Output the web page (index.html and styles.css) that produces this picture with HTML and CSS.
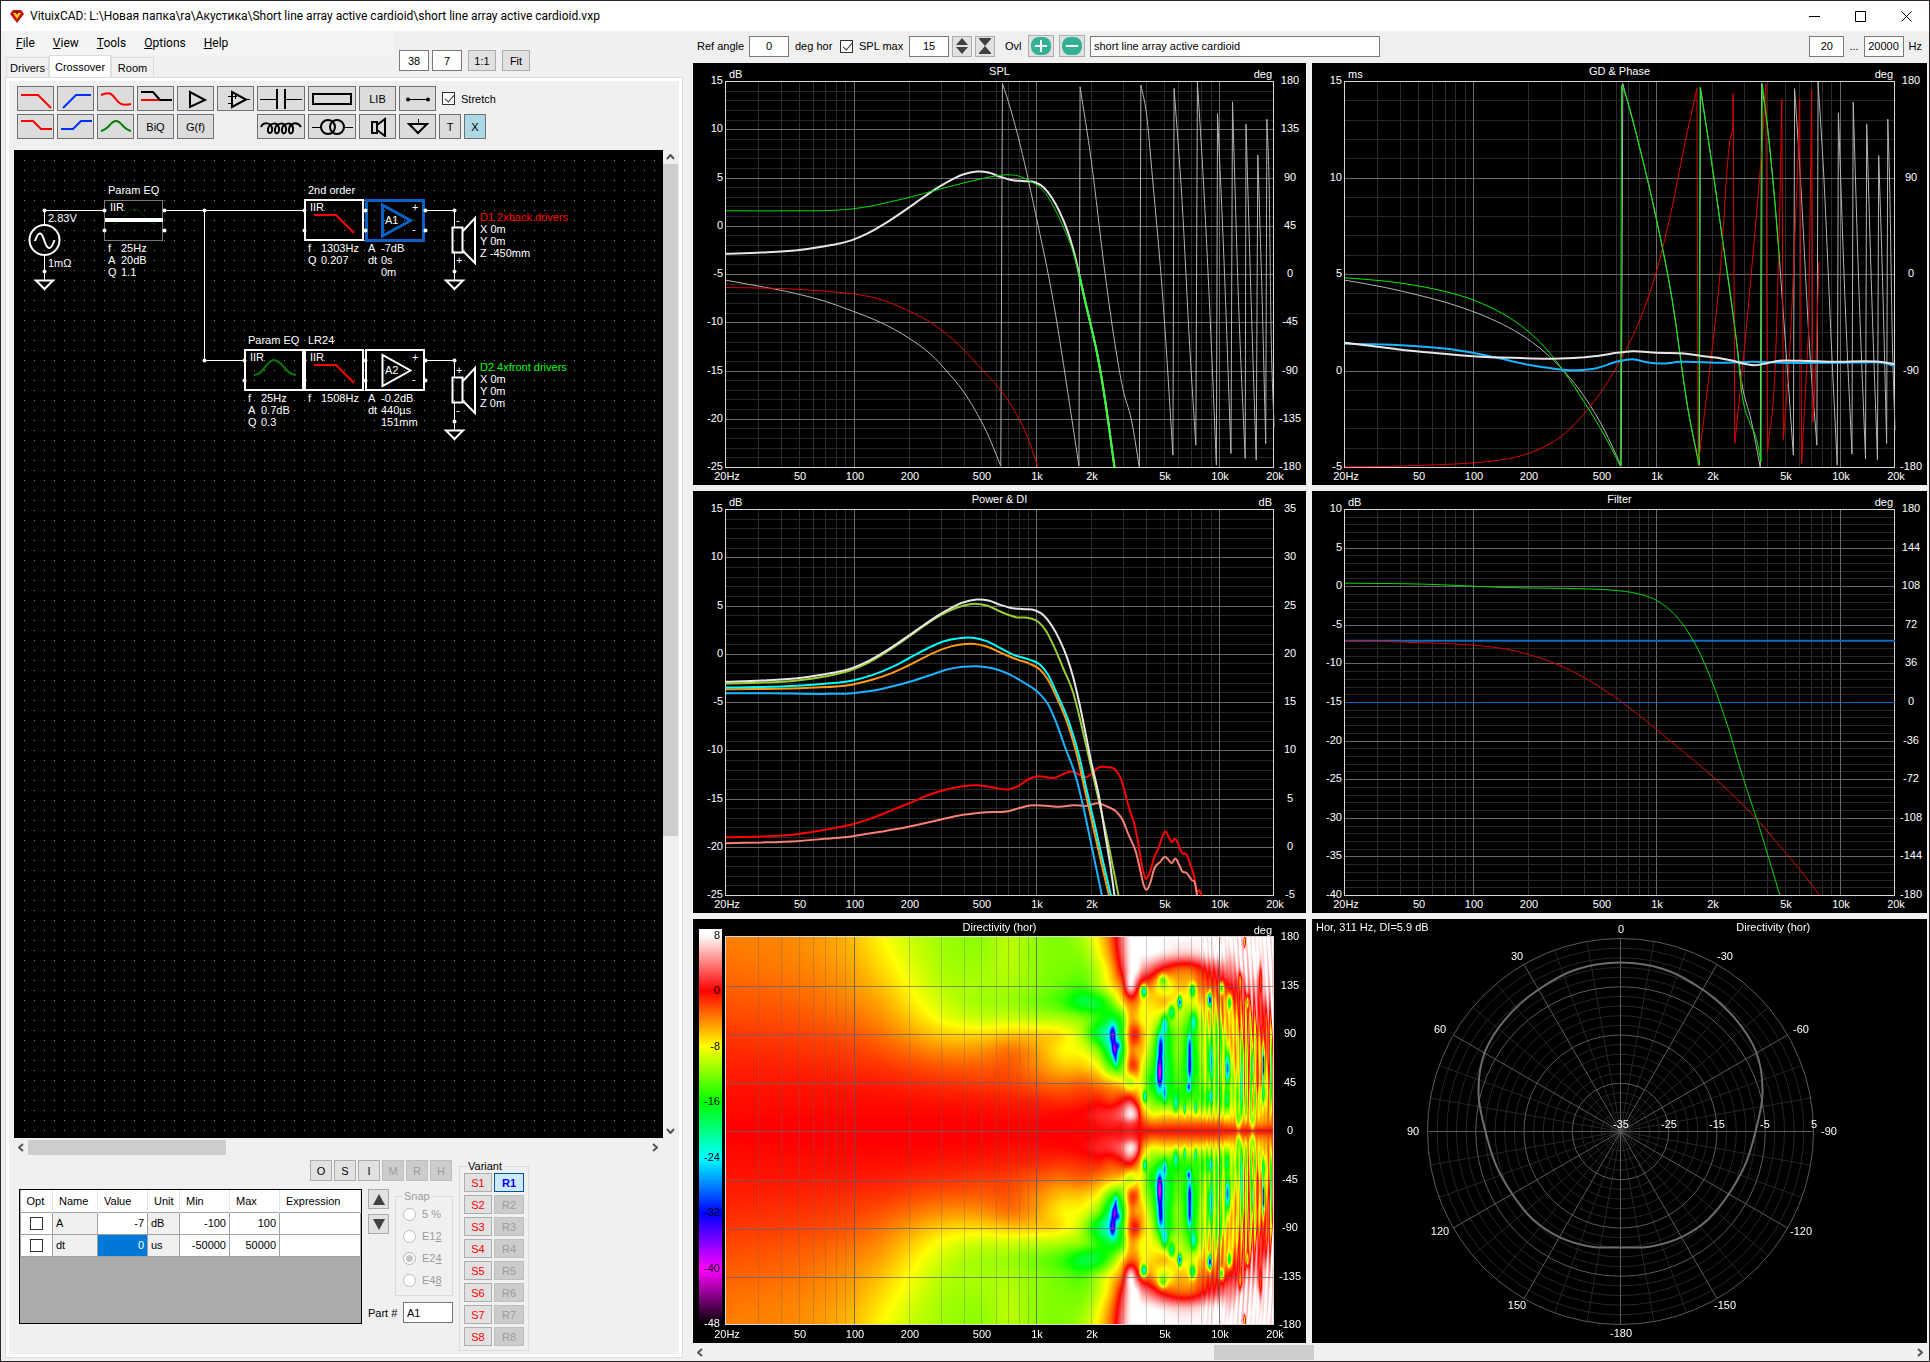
FILE: index.html
```html
<!DOCTYPE html>
<html lang="en">
<head>
  <meta charset="UTF-8">
  <meta name="viewport" content="width=device-width, initial-scale=1.0">
  <title>VituixCAD</title>
  <link rel="stylesheet" href="styles.css">
</head>
<body>

  <!-- Title bar -->
  <header class="titlebar">
    <svg class="logo" width="14" height="13" viewBox="0 0 14 13">
      <path d="M3 0h8l3 4-7 9-7-9z" fill="#c8100c"/>
      <path d="M3 3h3l1 2 1-2h3l-4 6z" fill="#ffd21c"/>
      <path d="M5 1h4l-2 3z" fill="#8a0500"/>
    </svg>
    <h1>VituixCAD: L:\Новая папка\ra\Акустика\Short line array active cardioid\short line array active cardioid.vxp</h1>
    <div class="window-buttons">
      <button aria-label="Minimize"><svg width="11" height="11"><path d="M0 5.5h11" stroke="#000"/></svg></button>
      <button aria-label="Maximize"><svg width="11" height="11"><path d="M.5 .5h10v10h-10z" stroke="#000" fill="none"/></svg></button>
      <button aria-label="Close"><svg width="11" height="11"><path d="M.5 .5l10 10M10.5 .5l-10 10" stroke="#000"/></svg></button>
    </div>
  </header>

  <main class="workspace">

    <!-- Left side: crossover editor -->
    <section class="editor">
      <div class="editor-head">
        <div>
          <nav class="menu">
            <a href="#"><u>F</u>ile</a>
            <a href="#"><u>V</u>iew</a>
            <a href="#"><u>T</u>ools</a>
            <a href="#"><u>O</u>ptions</a>
            <a href="#"><u>H</u>elp</a>
          </nav>
          <div class="tabs">
            <button class="tab">Drivers</button>
            <button class="tab active">Crossover</button>
            <button class="tab">Room</button>
          </div>
        </div>
        <div class="view-tools">
          <input type="text" class="field center" value="38" aria-label="Column">
          <input type="text" class="field center" value="7" aria-label="Row">
          <button class="btn">1:1</button>
          <button class="btn">Fit</button>
        </div>
      </div>

      <div class="tab-page">
        <div class="toolbar">
          <div class="tool-row">
            <button class="tool" aria-label="Low pass"><svg width="32" height="20"><path d="M1 6h17l13 13" stroke="red" stroke-width="2"/></svg></button>
            <button class="tool" aria-label="High pass"><svg width="32" height="20"><path d="M3 19L16 6h15" stroke="#0030ff" stroke-width="2"/></svg></button>
            <button class="tool" aria-label="Band"><svg width="32" height="20"><path d="M1 6c18-8 10 14 30 9" stroke="red" stroke-width="2"/></svg></button>
            <button class="tool" aria-label="Crossover"><svg width="32" height="20"><path d="M1 11h19" stroke="red" stroke-width="2"/><path d="M1 3h12l7 8h12" stroke="#000" stroke-width="2"/></svg></button>
            <button class="tool" aria-label="Buffer"><svg width="32" height="20"><path d="M10 3v15l15-7z" stroke="#000" stroke-width="2"/></svg></button>
            <button class="tool" aria-label="Op amp"><svg width="32" height="20"><path d="M12 3v15l14-7.500z" stroke="#000" stroke-width="2"/><path d="M8 7.500h9M15.500 5v5M8 14.500h3M26 10.500h4" stroke="#000"/></svg></button>
            <button class="tool wide" aria-label="Capacitor"><svg width="44" height="22"><path d="M1 11.500h17M26 11.500h17" stroke="#000"/><path d="M18 1v20M26 1v20" stroke="#000" stroke-width="2"/></svg></button>
            <button class="tool wide" aria-label="Resistor"><svg width="44" height="20"><path d="M3 5h38v10H3z" stroke="#000" stroke-width="2"/></svg></button>
            <button class="tool">LIB</button>
            <button class="tool" aria-label="Wire"><svg width="32" height="20"><path d="M5 10.500h22" stroke="#000"/><circle cx="6" cy="10.500" r="2"/><circle cx="26" cy="10.500" r="2"/></svg></button>
            <label class="check"><input type="checkbox" checked> Stretch</label>
          </div>
          <div class="tool-row">
            <button class="tool" aria-label="Low shelf"><svg width="32" height="20"><path d="M1 4h12l8 8h11" stroke="red" stroke-width="2"/></svg></button>
            <button class="tool" aria-label="High shelf"><svg width="32" height="20"><path d="M1 12h12l8-8h11" stroke="#0030ff" stroke-width="2"/></svg></button>
            <button class="tool" aria-label="Peak"><svg width="32" height="20"><path d="M1 14c9-2 9-10 15-10s6 8 15 10" stroke="green" stroke-width="2"/></svg></button>
            <button class="tool">BiQ</button>
            <button class="tool">G(f)</button>
            <span class="tool-gap"></span>
            <button class="tool wide" aria-label="Coil"><svg width="44" height="20"><path d="M2 10c2-5 10-5 11 1s-5 7-4 1 10-8 11-1-5 7-4 1 10-8 11-1-5 7-4 1 10-8 11-1-5 7-4 1 8-8 12-2" stroke="#000" stroke-width="2"/></svg></button>
            <button class="tool wide" aria-label="Transformer"><svg width="44" height="20"><path d="M2 10.500h9M34 10.500h9" stroke="#000"/><circle cx="18" cy="10" r="7" stroke="#000" stroke-width="2"/><circle cx="27" cy="10" r="7" stroke="#000" stroke-width="2"/></svg></button>
            <button class="tool" aria-label="Driver"><svg width="32" height="20"><path d="M10 5h5v11h-5zM15 8l8-6v17l-8-6" stroke="#000" stroke-width="2"/></svg></button>
            <button class="tool" aria-label="Ground"><svg width="32" height="20"><path d="M16.500 2v5" stroke="#000"/><path d="M7 7h18l-9 9z" stroke="#000" stroke-width="2"/></svg></button>
            <button class="tool narrow">T</button>
            <button class="tool narrow delete">X</button>
          </div>
        </div>

        <div class="schematic-row">
          <svg class="schematic" width="100%" height="100%">
            <defs>
              <pattern id="dots" width="10" height="10" patternUnits="userSpaceOnUse" x="5" y="5">
                <rect x="5" y="5" width="1" height="1" fill="#8a8a8a"/>
              </pattern>
            </defs>
            <rect x="6" y="6" width="100%" height="100%" fill="url(#dots)"/>

            <!-- wires -->
            <g class="wire">
              <path d="M30.500 75V60.500H90M150 60.500H290M190.500 60V210.500H230M411 60.500H440.500V77M440.500 103V130M411 210.500H440.500V227M440.500 253V280M30.500 105V130"/>
              <path d="M22 130.500h17l-8.500 8.500zM432 130.500h17l-8.500 8.500zM432 280.500h17l-8.500 8.500z" stroke-width="2"/>
            </g>

            <!-- generator -->
            <g class="part">
              <circle cx="30.500" cy="90" r="15"/>
              <path d="M21 91c4-12 7-8 9.500 0s6 11 10-1"/>
            </g>
            <text x="34" y="72">2.83V</text>
            <text x="34" y="117">1mΩ</text>

            <!-- bypassed Param EQ -->
            <rect x="90.500" y="50.500" width="58" height="40" fill="none" stroke="#777"/>
            <path d="M99 74c10 0 12-15 21-15s12 15 22 15" fill="none" stroke="#063c06"/>
            <rect x="91" y="68" width="58" height="4" fill="#fff"/>
            <text x="94" y="44">Param EQ</text>
            <text x="96" y="61">IIR</text>
            <text x="94" y="102">f</text><text x="107" y="102">25Hz</text>
            <text x="94" y="114">A</text><text x="107" y="114">20dB</text>
            <text x="94" y="126">Q</text><text x="107" y="126">1.1</text>

            <!-- branch 1 -->
            <rect class="part" x="291" y="50" width="58" height="40"/>
            <path class="lp" d="M300 65h22l18 18"/>
            <text x="294" y="44">2nd order</text>
            <text x="296" y="61">IIR</text>
            <text x="294" y="102">f</text><text x="307" y="102">1303Hz</text>
            <text x="294" y="114">Q</text><text x="307" y="114">0.207</text>
            <g class="part selected">
              <rect x="352.500" y="50.500" width="57" height="40"/>
              <path d="M368.500 55v31l28-15.500z"/>
            </g>
            <text x="371" y="74">A1</text>
            <text x="398" y="61">+</text><text x="398" y="83">-</text>
            <text x="354" y="102">A</text><text x="367" y="102">-7dB</text>
            <text x="354" y="114">dt</text><text x="367" y="114">0s</text>
            <text x="367" y="126">0m</text>
            <g class="part">
              <path d="M438.500 77.500h10v25h-10zM449 81l12-13v45l-12-12"/>
            </g>
            <text x="442" y="74">-</text><text x="442" y="114">+</text>
            <text x="466" y="71" class="red">D1 2xback drivers</text>
            <text x="466" y="83">X 0m</text>
            <text x="466" y="95">Y 0m</text>
            <text x="466" y="107">Z -450mm</text>

            <!-- branch 2 -->
            <g class="part">
              <rect x="231" y="200" width="58" height="40"/>
              <rect x="291" y="200" width="58" height="40"/>
              <rect x="352" y="200" width="58" height="40"/>
              <path d="M368.500 205v31l28-15.500z"/>
              <path d="M438.500 227.500h10v25h-10zM449 231l12-13v45l-12-12"/>
            </g>
            <path d="M240 225c10 0 12-15 20-15s12 15 22 15" fill="none" stroke="#0a7a0a" stroke-width="2"/>
            <path class="lp" d="M300 215h22l18 18"/>
            <text x="234" y="194">Param EQ</text>
            <text x="236" y="211">IIR</text>
            <text x="234" y="252">f</text><text x="247" y="252">25Hz</text>
            <text x="234" y="264">A</text><text x="247" y="264">0.7dB</text>
            <text x="234" y="276">Q</text><text x="247" y="276">0.3</text>
            <text x="294" y="194">LR24</text>
            <text x="296" y="211">IIR</text>
            <text x="294" y="252">f</text><text x="307" y="252">1508Hz</text>
            <text x="371" y="224">A2</text>
            <text x="398" y="211">+</text><text x="398" y="233">-</text>
            <text x="354" y="252">A</text><text x="367" y="252">-0.2dB</text>
            <text x="354" y="264">dt</text><text x="367" y="264">440µs</text>
            <text x="367" y="276">151mm</text>
            <text x="442" y="224">+</text><text x="442" y="264">-</text>
            <text x="466" y="221" class="green">D2 4xfront drivers</text>
            <text x="466" y="233">X 0m</text>
            <text x="466" y="245">Y 0m</text>
            <text x="466" y="257">Z 0m</text>

            <g id="pins" fill="#fff"></g>
          </svg>
          <div class="scroll-v">
            <button aria-label="Scroll up"><svg width="9" height="6"><path d="M1 5l3.500-4L8 5"/></svg></button>
            <div class="track"><div class="thumb"></div></div>
            <button aria-label="Scroll down"><svg width="9" height="6"><path d="M1 1l3.500 4L8 1"/></svg></button>
          </div>
        </div>
        <div class="scroll-h">
          <button aria-label="Scroll left"><svg width="6" height="9"><path d="M5 1L1 4.500L5 8"/></svg></button>
          <div class="track"><div class="thumb"></div></div>
          <button aria-label="Scroll right"><svg width="6" height="9"><path d="M1 1l4 3.500L1 8"/></svg></button>
        </div>

        <div class="bottom">
          <div class="params">
            <div class="mode-buttons">
              <button class="btn">O</button>
              <button class="btn">S</button>
              <button class="btn">I</button>
              <button class="btn" disabled>M</button>
              <button class="btn" disabled>R</button>
              <button class="btn" disabled>H</button>
            </div>
            <div class="params-body">
              <div class="grid-box">
                <table>
                  <thead>
                    <tr><th class="c-opt">Opt</th><th class="c-name">Name</th><th class="c-value">Value</th><th class="c-unit">Unit</th><th class="c-min">Min</th><th class="c-max">Max</th><th>Expression</th></tr>
                  </thead>
                  <tbody>
                    <tr><td class="opt"><input type="checkbox" aria-label="Optimize A"></td><td class="ro">A</td><td class="num">-7</td><td class="ro">dB</td><td class="num">-100</td><td class="num">100</td><td></td></tr>
                    <tr><td class="opt"><input type="checkbox" aria-label="Optimize dt"></td><td class="ro">dt</td><td class="num current">0</td><td class="ro">us</td><td class="num">-50000</td><td class="num">50000</td><td></td></tr>
                  </tbody>
                </table>
              </div>
              <div class="side">
                <div class="side-top">
                  <div class="arrows">
                    <button class="btn" aria-label="Up"><svg width="12" height="11"><path d="M6 0l6 11H0z" fill="#404040"/></svg></button>
                    <button class="btn" aria-label="Down"><svg width="12" height="11"><path d="M6 11l6-11H0z" fill="#404040"/></svg></button>
                  </div>
                  <fieldset class="snap" disabled>
                    <legend>Snap</legend>
                    <label><input type="radio" name="snap"> 5 %</label>
                    <label><input type="radio" name="snap"> <span>E1<u>2</u></span></label>
                    <label><input type="radio" name="snap" checked> <span>E2<u>4</u></span></label>
                    <label><input type="radio" name="snap"> <span>E4<u>8</u></span></label>
                  </fieldset>
                </div>
                <label class="part-no">Part # <input type="text" class="field" value="A1"></label>
              </div>
            </div>
          </div>
          <fieldset class="variant">
            <legend>Variant</legend>
            <button class="btn s">S1</button><button class="btn r on">R1</button>
            <button class="btn s">S2</button><button class="btn r" disabled>R2</button>
            <button class="btn s">S3</button><button class="btn r" disabled>R3</button>
            <button class="btn s">S4</button><button class="btn r" disabled>R4</button>
            <button class="btn s">S5</button><button class="btn r" disabled>R5</button>
            <button class="btn s">S6</button><button class="btn r" disabled>R6</button>
            <button class="btn s">S7</button><button class="btn r" disabled>R7</button>
            <button class="btn s">S8</button><button class="btn r" disabled>R8</button>
          </fieldset>
        </div>
      </div>
    </section>

    <!-- Right side: graphs -->
    <section class="graphs">
      <div class="graph-tools">
        <label class="w-ref" for="refangle">Ref angle</label>
        <input id="refangle" type="text" class="field center w-angle" value="0">
        <span class="w-deg">deg hor</span>
        <label class="check w-spl"><input type="checkbox" checked> SPL max</label>
        <input type="text" class="field center w-angle" value="15" aria-label="SPL max">
        <button class="btn icon" aria-label="Expand"><svg width="14" height="16"><path d="M7 0l6 7H1zM7 16l6-7H1z" fill="#404040"/></svg></button>
        <button class="btn icon" aria-label="Shrink"><svg width="14" height="16"><path d="M1 0h12v1L7 8 1 1zM1 16h12v-1L7 8l-6 7z" fill="#404040"/></svg></button>
        <span class="w-ovl">Ovl</span>
        <button class="btn ovl" aria-label="Add overlay"><svg width="20" height="18"><rect width="20" height="18" rx="8" fill="#33b194"/><path d="M4 9h12M10 3v12" stroke="#fff" stroke-width="2"/></svg></button>
        <button class="btn ovl" aria-label="Remove overlay"><svg width="20" height="18"><rect width="20" height="18" rx="8" fill="#33b194"/><path d="M4 9h12" stroke="#fff" stroke-width="2"/></svg></button>
        <input type="text" class="field w-project" value="short line array active cardioid" aria-label="Overlay name">
        <div class="range">
          <input type="text" class="field center w-from" value="20" aria-label="From Hz">
          <span class="dots">...</span>
          <input type="text" class="field center w-to" value="20000" aria-label="To Hz">
          <span class="hz">Hz</span>
        </div>
      </div>
      <div class="charts">
        <div class="chart" id="spl"></div>
        <div class="chart" id="gd"></div>
        <div class="chart" id="power"></div>
        <div class="chart" id="filter"></div>
        <div class="chart" id="heat"></div>
        <div class="chart" id="polar"></div>
      </div>
      <div class="scroll-h wide-scroll">
        <button aria-label="Scroll left"><svg width="6" height="9"><path d="M5 1L1 4.500L5 8"/></svg></button>
        <div class="track"><div class="thumb"></div></div>
        <button aria-label="Scroll right"><svg width="6" height="9"><path d="M1 1l4 3.500L1 8"/></svg></button>
      </div>
    </section>
  </main>

  <script src="charts.js"></script>
</body>
</html>
```
FILE: styles.css
```css
* {
  box-sizing: border-box;
}
body {
  margin: 0;
  height: 100vh;
  display: flex;
  flex-direction: column;
  background: #f0f0f0;
  border: 1px solid #2b2629;
  overflow: hidden;
  color: #000;
  font: 11px/14px "Liberation Sans", sans-serif;
}
button, input, legend, fieldset, table {
  font: inherit;
  color: inherit;
}
button {
  padding: 0;
  border: none;
  background: none;
}
svg {
  display: block;
}

/* Title bar */
.titlebar {
  flex: none;
  height: 30px;
  display: flex;
  align-items: center;
  background: #fff;
  padding-left: 9px;
}
.titlebar h1 {
  flex: 1;
  margin: 0 0 0 6px;
  font: 12px/16px Roboto, sans-serif;
}
.window-buttons {
  display: flex;
}
.window-buttons button {
  width: 46px;
  height: 30px;
  display: grid;
  place-items: center;
}

.workspace {
  flex: 1;
  min-height: 0;
  display: flex;
}

/* Shared controls */
.field {
  height: 21px;
  border: 1px solid #7a7a7a;
  background: #fff;
  padding: 0 3px;
  min-width: 0;
}
.center {
  text-align: center;
}
.btn {
  border: 1px solid #adadad;
  background: #e1e1e1;
  display: grid;
  place-items: center;
}
.btn:disabled {
  background: #ccc;
  border-color: #bfbfbf;
  color: #9c9c9c;
}
.check {
  display: flex;
  align-items: center;
  gap: 6px;
}
input[type="checkbox"] {
  appearance: none;
  width: 13px;
  height: 13px;
  margin: 0;
  border: 1px solid #333;
  background: #fff;
}
input[type="checkbox"]:checked::before {
  content: "";
  display: block;
  width: 4px;
  height: 8px;
  margin: 0 0 0 4px;
  border: solid #333;
  border-width: 0 1px 1px 0;
  transform: rotate(40deg);
}

/* Editor */
.editor {
  flex: 0 0 682px;
  display: flex;
  flex-direction: column;
  padding: 0 0 3px 4px;
}
.editor-head {
  display: flex;
  height: 46px;
}
.menu {
  width: 388px;
  height: 24px;
  padding-left: 2px;
  display: flex;
  background: #f4f4f4;
}
.menu a {
  padding: 0 9px;
  color: #000;
  text-decoration: none;
  font: 12px/24px Roboto, sans-serif;
}
.tabs {
  display: flex;
  align-items: flex-end;
  height: 22px;
  padding-left: 1px;
}
.tab {
  width: 43px;
  height: 20px;
  border: 1px solid #dcdcdc;
  border-bottom: none;
}
.tab.active {
  width: 62px;
  height: 22px;
  background: #fff;
}
.view-tools {
  display: flex;
  gap: 3px;
  padding: 19px 0 0 6px;
}
.view-tools .field {
  width: 30px;
}
.view-tools .btn {
  width: 28px;
  height: 21px;
  margin-left: 3px;
}
.tab-page {
  flex: 1;
  min-height: 0;
  display: flex;
  flex-direction: column;
  border: 1px solid #dcdcdc;
  box-shadow: inset 0 0 0 3px #fff;
  padding: 8px 3px 4px 8px;
}

.toolbar {
  padding: 0 0 11px 3px;
}
.tool-row {
  display: flex;
  align-items: center;
  gap: 3px;
  margin-bottom: 3px;
}
.tool-row:last-child {
  margin-bottom: 0;
}
.tool {
  width: 37px;
  height: 25px;
  border: 1px solid #707070;
  background: #dcdcdc;
  display: grid;
  place-items: center;
}
.tool svg {
  fill: none;
}
.tool circle:not([stroke]) {
  fill: #000;
}
.tool.wide {
  width: 48px;
}
.tool.narrow {
  width: 22px;
}
.tool.delete {
  background: #add8e6;
}
.tool-gap {
  width: 37px;
}
.tool-row .check {
  margin-left: 3px;
}

/* Schematic */
.schematic-row {
  flex: 1;
  min-height: 0;
  display: flex;
}
.schematic {
  flex: 1;
  min-width: 0;
  background: #000;
}
.schematic text {
  fill: #fff;
}
.schematic text.red {
  fill: #f00;
}
.schematic text.green {
  fill: #0f0;
}
.wire {
  fill: none;
  stroke: #fff;
}
.part {
  fill: none;
  stroke: #fff;
  stroke-width: 2;
}
.selected {
  stroke: #0b62c4;
  stroke-width: 3;
}
.lp {
  fill: none;
  stroke: #f00;
  stroke-width: 2;
}

.scroll-v {
  width: 16px;
  display: flex;
  flex-direction: column;
}
.scroll-v button,
.scroll-h button {
  width: 14px;
  height: 14px;
  display: grid;
  place-items: center;
}
.scroll-v svg,
.scroll-h svg {
  fill: none;
  stroke: #555;
  stroke-width: 2;
}
.track {
  flex: 1;
}
.scroll-v .thumb {
  width: 15px;
  height: 70%;
  background: #cdcdcd;
}
.scroll-h {
  flex: none;
  height: 17px;
  padding-top: 1px;
  margin-right: 17px;
  display: flex;
  align-items: center;
}
.scroll-h .thumb {
  width: 32%;
  height: 15px;
  background: #cdcdcd;
}
.scroll-h.wide-scroll {
  height: 18px;
  margin: 0;
}
.wide-scroll .thumb {
  width: 100px;
  margin-left: 42%;
}

/* Parameters under the schematic */
.bottom {
  flex: none;
  display: flex;
  align-items: flex-start;
  gap: 6px;
  padding: 4px 0 0 5px;
  height: 198px;
}
.params {
  width: 434px;
}
.mode-buttons {
  display: flex;
  justify-content: flex-end;
  gap: 2px;
  padding: 1px 1px 0 0;
}
.mode-buttons .btn {
  width: 22px;
  height: 21px;
}
.params-body {
  display: flex;
  gap: 6px;
  margin-top: 8px;
}
.grid-box {
  width: 343px;
  height: 135px;
  border: 1px solid #000;
  background: #ababab;
}
.grid-box table {
  width: 100%;
  table-layout: fixed;
  border-collapse: collapse;
}
.grid-box th {
  height: 22px;
  padding: 0 6px;
  background: #fff;
  border-right: 1px solid #e5e5e5;
  font-weight: normal;
  text-align: left;
}
.grid-box td {
  height: 22px;
  padding: 0 3px;
  background: #fff;
  border: 1px solid #a0a0a0;
}
.grid-box td.ro {
  background: #f0f0f0;
}
.grid-box td.num {
  text-align: right;
}
.grid-box td.current {
  background: #0078d7;
  color: #fff;
}
.grid-box td.opt {
  padding-left: 9px;
}
.opt input {
  display: block;
}
.c-opt { width: 32px; }
.c-name { width: 45px; }
.c-value { width: 50px; }
.c-unit { width: 32px; }
.c-min { width: 50px; }
.c-max { width: 50px; }

.side {
  flex: 1;
}
.side-top {
  display: flex;
  gap: 6px;
}
.arrows .btn {
  width: 21px;
  height: 20px;
  margin-bottom: 5px;
}
fieldset {
  margin: 0;
  padding: 0;
  border: 1px solid #dcdcdc;
  min-width: 0;
}
legend {
  padding: 0 1px;
  margin-left: 7px;
}
.snap {
  width: 58px;
  height: 107px;
  color: #9c9c9c;
}
.snap label {
  display: flex;
  align-items: center;
  gap: 6px;
  height: 22px;
  padding-left: 7px;
}
.snap input {
  appearance: none;
  width: 13px;
  height: 13px;
  margin: 0;
  border: 1px solid #bcbcbc;
  border-radius: 50%;
  background: #fff;
}
.snap input:checked {
  background: #c4c4c4;
  box-shadow: inset 0 0 0 2px #fff;
}
.part-no {
  display: flex;
  align-items: center;
  justify-content: space-between;
  margin-top: 6px;
}
.part-no .field {
  width: 50px;
}
.variant {
  width: 70px;
  height: 192px;
  display: grid;
  grid-template-columns: 28px 30px;
  grid-auto-rows: 19px;
  gap: 3px 2px;
  justify-content: center;
  align-content: start;
}
.variant .s {
  color: #f00;
}
.variant .on {
  color: #00f;
  font-weight: bold;
  background: #cce8ff;
  border-color: #005499;
}

/* Graphs */
.graphs {
  flex: 1;
  min-width: 0;
  display: flex;
  flex-direction: column;
  padding: 0 2px 0 10px;
}
.graph-tools {
  flex: none;
  height: 32px;
  display: flex;
  align-items: center;
  padding: 0 5px 2px 4px;
}
.w-ref { width: 52px; }
.w-angle { width: 40px; }
.w-deg { padding-left: 6px; width: 51px; }
.w-spl { width: 69px; }
.w-ovl { width: 23px; margin-left: 10px; }
.w-project { width: 290px; }
.w-from { width: 35px; }
.w-to { width: 40px; }
.btn.icon {
  width: 20px;
  height: 21px;
  margin-left: 3px;
}
.btn.ovl {
  width: 26px;
  height: 22px;
  margin-right: 5px;
}
.range {
  margin-left: auto;
  display: flex;
  align-items: center;
  gap: 5px;
}
.charts {
  flex: 1;
  min-height: 0;
  display: grid;
  grid-template-columns: 613fr 614fr;
  grid-template-rows: 422fr 422fr 424fr;
  gap: 6px;
}
.chart {
  position: relative;
  min-width: 0;
  min-height: 0;
  overflow: hidden;
  background: #000;
}
.chart svg {
  position: absolute;
  inset: 0;
  width: 100%;
  height: 100%;
}
.chart canvas {
  position: absolute;
}
.chart text {
  fill: #fff;
}
.chart text.dark {
  fill: #000;
}
.mid {
  text-anchor: middle;
}
.end {
  text-anchor: end;
}
```
FILE: charts.js
```javascript
const NS = 'http://www.w3.org/2000/svg';

// plot margins inside a chart
const M = { left: 33, right: 32, top: 18, bottom: 18 };

const FREQ_LABELS = [[20, '20Hz'], [50, '50'], [100, '100'], [200, '200'], [500, '500'], [1000, '1k'], [2000, '2k'], [5000, '5k'], [10000, '10k'], [20000, '20k']];

const PHASE_TAIL = '1141 255 1155 340 1170 530 1198 920 1222 1365|1225 265 1245 600 1265 1050 1280 1335|1284 245 1300 560 1318 1000 1332 1395|1335 340 1352 800 1369 1360|1373 305 1388 900 1405 1375|1407 372 1420 900 1433 1380|1437 465 1448 900 1457 1330|1460 357 1466 580 1470 950 1478 1280';

// sheet: x, y, width, height of the plot area the trace points are given in.
// A bar in a trace marks a phase wrap.
const CHARTS = {
  spl: {
    title: 'SPL', left: 'dB', right: 'deg', sheet: [90, 244, 1388, 1158], minor: 5,
    leftTicks: [15, 10, 5, 0, -5, -10, -15, -20, -25],
    rightTicks: [180, 135, 90, 45, 0, -45, -90, -135, -180],
    traces: [
      ['#b4b4b4', 1, '90 840 150 853 210 866 270 881 340 903 411 933 480 966 552 1013 610 1064 650 1114 690 1172 720 1228 750 1295 775 1365 786 1398|790 250 800 285 830 410 874 640 920 910 960 1210 984 1398|987 260 1015 480 1050 820 1075 1030 1095 1165 1117 1260 1137 1402|' + PHASE_TAIL],
      ['#e00000', 1, '90 862 150 863 250 866 340 873 411 881 470 894 530 920 570 942 610 968 650 1003 690 1046 734 1103 780 1162 820 1230 850 1300 870 1365 880 1402'],
      ['#e6e6e6', 2, '90 761 180 757 270 750 340 738 380 729 411 719 450 699 490 672 530 641 570 608 610 575 650 546 690 523 725 514 755 517 785 530 815 540 845 543 874 547 895 562 915 592 935 635 955 692 970 750 985 825 1000 905 1015 980 1030 1060 1045 1160 1060 1280 1074 1402'],
      ['#00e000', 1, '90 632 250 632 370 630 411 626 460 617 510 604 560 590 600 577 650 561 700 546 740 535 775 527 810 524 835 529 855 540 874 552 900 580 920 620 945 682 968 752 985 825'],
      ['#30ff30', 2, '985 825 1000 905 1015 980 1030 1060 1045 1160 1060 1280 1074 1402']
    ]
  },
  gd: {
    title: 'GD & Phase', left: 'ms', right: 'deg', sheet: [99, 244, 1380, 1158], minor: 5,
    leftTicks: [15, 10, 5, 0, -5],
    rightTicks: [180, 90, 0, -90, -180],
    traces: [
      ['#b4b4b4', 1, '99 840 200 862 280 884 350 906 420 934 480 964 540 1003 600 1056 650 1115 700 1190 750 1290 792 1398|796 250 840 450 880 655 920 900 960 1230 988 1395|991 262 1017 470 1050 750 1080 1010 1095 1150 1118 1260 1141 1402|1144 250 1160 390 1180 640 1200 960 1224 1365|1227 265 1240 500 1265 1050 1283 1335|1286 245 1300 520 1320 1050 1334 1395|1337 338 1352 850 1371 1362|1374 306 1388 850 1405 1376|1408 372 1421 900 1435 1380|1438 466 1448 850 1458 1330|1461 357 1466 580 1472 1000 1479 1290'],
      ['#e00000', 1, '99 1400 200 1399 300 1395 420 1388 480 1381 540 1367 590 1345 640 1310 690 1253 742 1174 790 1080 840 955 879 820 920 620 950 440 982 265|985 1398 1010 1150 1040 820 1065 420 1072 390|1073 280|1077 1330 1095 1120 1120 800 1145 450|1155 250|1159 1355 1180 1050 1190 620|1195 297|1199 1318 1215 1050 1235 500|1240 295|1245 1390 1262 1000|1270 270|1273 1265 1280 1100 1288 785'],
      ['#00f000', 1, '99 833 200 843 300 861 360 877 420 899 470 925 520 959 560 995 600 1041 650 1117 700 1207 740 1285 770 1350 790 1398|793 255 800 275 840 450 880 655 920 900 960 1230 987 1395|990 262 1017 470 1050 750 1080 1010 1095 1180 1115 1270 1130 1310 1143 1385|1146 250 1160 390 1180 640 1190 790'],
      ['#18b4ff', 2, '99 1031 180 1032 280 1038 370 1048 420 1058 480 1073 560 1094 620 1105 680 1110 730 1104 780 1085 820 1077 860 1087 890 1090 940 1085 1050 1088 1120 1085 1200 1088 1400 1087 1450 1088 1479 1098'],
      ['#e6e6e6', 2, '99 1028 150 1035 230 1047 320 1058 420 1068 520 1073 640 1075 700 1071 740 1066 780 1058 820 1053 880 1058 950 1060 990 1067 1040 1074 1070 1081 1100 1091 1125 1095 1155 1090 1180 1083 1240 1082 1320 1085 1450 1086 1479 1092']
    ]
  },
  power: {
    title: 'Power & DI', left: 'dB', right: 'dB', sheet: [90, 73, 1388, 1158], minor: 5,
    leftTicks: [15, 10, 5, 0, -5, -10, -15, -20, -25],
    rightTicks: [35, 30, 25, 20, 15, 10, 5, 0, -5],
    traces: [
      ['#ff0000', 2, '90 1056 180 1054 270 1047 340 1034 411 1017 460 999 510 975 552 955 600 931 650 912 690 903 734 901 770 908 805 913 830 903 855 883 875 874 925 877 945 866 965 859 985 868 1003 876 1017 865 1032 848 1055 846 1078 856 1090 880 1100 920 1110 965 1125 1020 1135 1080 1145 1150 1153 1180 1162 1165 1175 1115 1187 1085 1197 1048 1204 1039 1212 1058 1218 1070 1228 1061 1235 1075 1245 1104 1256 1107 1265 1135 1275 1170 1283 1220 1289 1215 1295 1231'],
      ['#fa8072', 2, '90 1074 180 1072 270 1068 340 1061 411 1053 480 1040 552 1025 620 1007 690 989 750 981 805 978 835 968 860 961 900 962 935 965 970 960 1005 962 1032 954 1055 964 1080 981 1095 1005 1110 1050 1128 1100 1140 1160 1148 1200 1155 1214 1164 1195 1175 1150 1190 1130 1202 1115 1210 1123 1219 1134 1229 1120 1236 1135 1245 1158 1256 1163 1270 1185 1278 1195 1283 1230'],
      ['#18b4ff', 2, '90 624 200 624 350 626 411 624 460 617 510 604 560 588 610 569 650 553 690 545 725 543 765 549 800 563 840 589 880 621 905 656 925 708 950 790 975 870 995 965 1012 1060 1028 1150 1042 1230'],
      ['#ff9812', 2, '90 612 300 608 411 598 460 584 510 564 552 541 600 512 640 491 680 479 715 476 750 484 790 505 830 524 860 536 885 553 905 583 930 643 958 725 980 815 1000 920 1020 1025 1040 1130 1060 1230'],
      ['#00ffff', 2, '90 607 270 602 340 596 411 586 460 570 510 546 552 520 600 490 640 469 680 459 715 458 750 468 785 489 820 510 860 524 885 538 905 567 930 630 960 715 985 815 1005 922 1025 1025 1045 1130 1065 1230'],
      ['#9acd32', 2, '90 595 270 586 340 574 411 553 450 533 490 505 530 474 570 440 610 407 650 380 690 362 720 356 750 361 790 382 825 396 860 399 880 409 900 436 920 482 945 552 970 625 985 694 1000 770 1016 852 1035 950 1060 1085 1084 1230'],
      ['#e6e6e6', 2, '90 590 180 586 270 579 340 567 380 558 411 548 450 528 490 501 530 470 570 437 610 404 650 375 690 352 725 343 755 346 785 359 815 369 845 372 874 376 895 391 915 421 935 464 955 521 970 579 985 654 1000 740 1015 830 1035 935 1050 1045 1064 1145 1074 1231']
    ]
  },
  filter: {
    title: 'Filter', left: 'dB', right: 'deg', sheet: [99, 73, 1380, 1158], minor: 5,
    leftTicks: [10, 5, 0, -5, -10, -15, -20, -25, -30, -35, -40],
    rightTicks: [180, 144, 108, 72, 36, 0, -36, -72, -108, -144, -180],
    traces: [
      ['#0b6cc8', 2, '99 467 1479 467'],
      ['#0b6cc8', 1, '99 652 1479 652'],
      ['#d80000', 1, '99 467 200 469 300 473 420 480 500 491 560 508 620 532 680 565 740 607 810 665 880 732 950 802 1020 872 1080 939 1133 1003 1200 1097 1250 1168 1289 1230'],
      ['#00dc00', 1, '99 294 200 295 300 297 420 303 500 307 600 309 700 311 780 316 820 322 850 331 880 345 905 365 935 400 960 441 985 493 1010 560 1038 648 1065 745 1090 848 1115 940 1133 1005 1160 1110 1190 1230']
    ]
  }
};

// Directivity: response in dB at each column position (of 549) and angle
const ANGLES = [180, 165, 150, 135, 120, 105, 90, 75, 60, 45, 30, 15, 7, 0];
const COLUMNS = [
  [0, -4, -3.7, -3.4, -3, -2.6, -2.2, -1.7, -1.3, -1, -.7, -.4, -.2, 0, 0],
  [80, -4.6, -4.4, -4.1, -3.7, -3.2, -2.7, -2.1, -1.6, -1.1, -.7, -.4, -.1, 0, 0],
  [127, -6, -5.7, -5.2, -4.8, -4.2, -3.5, -2.7, -2, -1.4, -.8, -.4, -.1, 0, 0],
  [154, -7.8, -7.3, -6.7, -6, -5.2, -4.4, -3.5, -2.5, -1.6, -.9, -.4, -.1, 0, 0],
  [183, -9.6, -9.2, -8.6, -8, -7.2, -6.2, -4.9, -3.4, -2.1, -1.2, -.5, -.1, 0, 0],
  [217, -11, -10.9, -10.6, -10.2, -9.6, -8.4, -6.4, -4.4, -2.7, -1.5, -.7, -.1, 0, 0],
  [255, -11.5, -11.3, -10.9, -10.8, -10.9, -9.6, -6.8, -4.5, -2.9, -1.8, -.8, -.2, 0, 0],
  [285, -10.3, -10.3, -10.4, -10.8, -11.2, -9.6, -6.2, -3.6, -2.7, -2, -1, -.3, 0, 0],
  [310, -11.5, -11.5, -11.5, -11.7, -12.3, -10.2, -6.4, -5, -4.2, -2.8, -1.2, -.3, 0, 0],
  [336, -12, -12, -12.2, -12.8, -14.2, -10.8, -7.4, -7.6, -6, -3.6, -1.6, -.2, 0, 0],
  [360, -10, -11, -12, -13.5, -18, -12.5, -12, -9, -6.5, -3.2, -1.2, .3, 0, 0],
  [372, -7.5, -8.5, -10, -11, -17, -15, -18, -12, -8, -4.2, -1, 1, .5, 0],
  [387, -2, -3, -5, -7, -12, -17, -22, -20, -14, -6, -2, 1.8, 1, 0],
  [395, 3, 2, 0, -4, -8, -15, -17, -18, -14, -7, -1, 3, 1, 0],
  [406, 8, 8, 8, 7, -3, -5, -1.5, -4, -2, -10, 0, 7, 2, .5],
  [411, 8, 8, 8, 2, -4, -6, -1, -5, -3, -8, -3, 4, 1, 0],
  [416, 8, 8, 5, -2, -7, -8, -5, -6, -8, -9, -7, -3, -1, 0],
  [424, 8, 8, 3, -4, -7, -8, -9, -11, -13, -15, -12, -7, -3, 0],
  [438, 8, 7, -1, -9, -6, -11, -17, -18, -19, -18, -14, -7, -3, 0],
  [453, 8, 6, -3, -6, -8, -10, -12, -12, -13, -14, -15, -7, -3, 0],
  [465, 8, 6, -3, -6, -9, -13, -16, -18, -18, -16, -14, -7, -3, 0],
  [478, 8, 7, 0, -3, -6, -9, -10, -10, -11, -12, -14, -8, -3, 0],
  [490, 8, 8, 2, -2, -5, -8, -12, -12, -12, -12, -13, -8, -3, 0],
  [505, 8, 7, 4, 0, -4, -6, -7, -8, -9, -10, -11, -8, -4, 0],
  [520, 8, 8, 7, 4, 1, -3, -5, -6, -6, -7, -10, -8, -4, 0],
  [535, 8, 8, 8, 6, 3, 0, -3, -4, -4, -5, -7, -6, -4, 0],
  [549, 8, 8, 8, 7, 5, 3, 0, -1, -3, -4, -6, -5, -3, 0]
];
// local nulls: position, angle, widths, depth
const NULLS = [
  [387, 90, 3, 9, -14], [389, 76, 3, 7, -16], [393, 80, 2, 4, -8], [390, 66, 2, 6, -10],
  [418, 130, 3, 5, -20], [437, 141, 4, 5, -7], [454, 120, 2, 5, -22], [446, 111, 3, 6, -12],
  [439, 100, 3, 8, -12], [435, 80, 3, 12, -14], [434, 55, 3, 16, -22], [419, 32, 2, 5, -14], [439, 35, 2, 8, -12],
  [467, 131, 3, 6, -14], [468, 102, 3, 8, -10], [464, 80, 2, 10, -12], [464, 60, 2, 14, -16], [463, 41, 2, 4, -14],
  [459, 21, 1, 5, -14], [470, 22, 1, 5, -14], [450, 25, 2, 7, -10], [484, 122, 2, 6, -28],
  [485, 66, 2, 18, -14], [485, 32, 2, 6, -12], [496, 133, 2, 5, -14], [504, 120, 2, 6, -14],
  [502, 58, 2, 14, -20], [502, 30, 2, 9, -10], [516, 50, 2, 22, -14], [527, 62, 1, 18, -22], [538, 62, 1, 15, -30],
  [538, 35, 2, 10, -14], [522, 120, 1, 6, -18], [546, 60, 1, 25, -14], [519, 176, 1, 5, -20],
  [515, 140, 2, 8, -8], [535, 142, 2, 14, -10], [527, 10, 2, 8, -8], [513, 10, 2, 8, -8]
];
const SCALE = [
  [8, 255, 255, 255], [0, 255, 0, 0], [-8, 255, 255, 0], [-16, 0, 255, 0], [-24, 0, 255, 255],
  [-32, 0, 0, 255], [-40, 255, 0, 255], [-48, 0, 0, 0]
];

function add(parent, name, attrs, text) {
  const el = document.createElementNS(NS, name);
  for (const key in attrs) el.setAttribute(key, attrs[key]);
  if (text !== undefined) el.textContent = text;
  parent.appendChild(el);
  return el;
}

// slope at point k, neighbours weighted by distance
function slopeAt(xs, ys, k) {
  const s = i => (ys[i + 1] - ys[i]) / (xs[i + 1] - xs[i]);
  if (xs.length < 2) return 0;
  if (k === 0) return s(0);
  if (k === xs.length - 1) return s(k - 1);
  const h1 = xs[k] - xs[k - 1], h2 = xs[k + 1] - xs[k];
  return (h2 * s(k - 1) + h1 * s(k)) / (h1 + h2);
}

function smooth(pts) {
  const xs = pts.map(p => p[0]), ys = pts.map(p => p[1]);
  let d = '';
  for (let i = 0; i < pts.length - 1; i++) {
    const h = (xs[i + 1] - xs[i]) / 3;
    d += 'C' + [xs[i] + h, ys[i] + slopeAt(xs, ys, i) * h,
      xs[i + 1] - h, ys[i + 1] - slopeAt(xs, ys, i + 1) * h,
      xs[i + 1], ys[i + 1]].map(v => v.toFixed(2)).join(' ');
  }
  return d;
}

function frame(box) {
  const w = box.clientWidth, h = box.clientHeight;
  box.innerHTML = '';
  return {
    svg: add(box, 'svg', {}),
    w, h,
    x0: M.left, y0: M.top,
    pw: w - M.left - M.right, ph: h - M.top - M.bottom
  };
}

function freqX(f, hz) {
  return f.x0 + f.pw * Math.log10(hz / 20) / 3;
}

function vLines(f, minor, major) {
  for (let dec = 10; dec <= 10000; dec *= 10) {
    for (let n = 1; n < 10; n++) {
      const hz = dec * n;
      if (hz <= 20 || hz >= 20000) continue;
      const x = Math.round(freqX(f, hz)) + .5;
      add(f.svg, 'path', { d: `M${x} ${f.y0}v${f.ph}`, stroke: n === 1 ? major : minor });
    }
  }
}

function labels(f, chart) {
  add(f.svg, 'text', { x: f.w / 2, y: 12, class: 'mid' }, chart.title);
  if (chart.left) add(f.svg, 'text', { x: f.x0 + 3, y: 15 }, chart.left);
  add(f.svg, 'text', { x: f.x0 + f.pw - 2, y: 15, class: 'end' }, chart.right);
  const n = chart.rightTicks.length - 1;
  chart.rightTicks.forEach((t, i) => {
    const y = Math.round(f.y0 + f.ph * i / n) + 3;
    if (chart.leftTicks) add(f.svg, 'text', { x: f.x0 - 3, y, class: 'end' }, chart.leftTicks[i * (chart.leftTicks.length - 1) / n]);
    add(f.svg, 'text', { x: f.x0 + f.pw + 16, y, class: 'mid' }, t);
  });
  FREQ_LABELS.forEach(([hz, t]) => add(f.svg, 'text', { x: Math.round(freqX(f, hz)) + 1, y: f.h - 5, class: 'mid' }, t));
}

function drawLineChart(id) {
  const chart = CHARTS[id];
  const f = frame(document.getElementById(id));
  const n = chart.leftTicks.length - 1;
  const rows = n * chart.minor;
  for (let i = 1; i < rows; i++) {
    if (i % chart.minor) {
      add(f.svg, 'path', { d: `M${f.x0} ${Math.round(f.y0 + f.ph * i / rows) + .5}h${f.pw}`, stroke: '#262626' });
    }
  }
  vLines(f, '#2a2a2a', '#6a6a6a');
  for (let i = 1; i < n; i++) {
    add(f.svg, 'path', { d: `M${f.x0} ${Math.round(f.y0 + f.ph * i / n) + .5}h${f.pw}`, stroke: '#6a6a6a' });
  }
  add(f.svg, 'rect', { x: f.x0 - .5, y: f.y0 + .5, width: f.pw, height: f.ph, fill: 'none', stroke: '#d8d8d8' });

  const [sx, sy, sw, sh] = chart.sheet;
  chart.traces.forEach(([color, width, data]) => {
    let d = '';
    data.split('|').forEach(part => {
      const v = part.split(' ').map(Number);
      const pts = [];
      for (let i = 0; i < v.length; i += 2) {
        pts.push([f.x0 + (v[i] - sx) / sw * f.pw, f.y0 + .5 + (v[i + 1] - sy) / sh * f.ph]);
      }
      d += (d ? 'L' : 'M') + pts[0][0].toFixed(1) + ' ' + pts[0][1].toFixed(1) + smooth(pts);
    });
    add(f.svg, 'path', { d, stroke: color, 'stroke-width': width, fill: 'none', 'stroke-linejoin': 'bevel' });
  });
  labels(f, chart);
}

function hermite(xs, ys, x) {
  const up = xs[xs.length - 1] > xs[0];
  let i = 0;
  while (i < xs.length - 2 && (up ? x > xs[i + 1] : x < xs[i + 1])) i++;
  const h = xs[i + 1] - xs[i], t = (x - xs[i]) / h;
  const t2 = t * t, t3 = t2 * t;
  return (2 * t3 - 3 * t2 + 1) * ys[i] + (t3 - 2 * t2 + t) * h * slopeAt(xs, ys, i) +
    (3 * t2 - 2 * t3) * ys[i + 1] + (t3 - t2) * h * slopeAt(xs, ys, i + 1);
}

function colorOf(db) {
  const v = Math.max(-48, Math.min(8, db));
  const i = Math.min(6, Math.floor((8 - v) / 8));
  const t = (8 - v) / 8 - i;
  return [1, 2, 3].map(k => SCALE[i][k] + (SCALE[i + 1][k] - SCALE[i][k]) * t);
}

function drawHeat() {
  const box = document.getElementById('heat');
  const f = frame(box);
  const canvas = document.createElement('canvas');
  canvas.width = f.pw;
  canvas.height = f.ph;
  canvas.style.left = f.x0 + 'px';
  canvas.style.top = f.y0 + 'px';
  box.insertBefore(canvas, f.svg);
  const ctx = canvas.getContext('2d');
  const img = ctx.createImageData(f.pw, f.ph);
  const xs = COLUMNS.map(c => c[0]);

  const half = Math.ceil(f.ph / 2);
  for (let y = 0; y <= half; y++) {
    const angle = Math.max(0, 180 - 360 * y / f.ph);
    const row = COLUMNS.map(c => hermite(ANGLES, c.slice(1), angle));
    for (let x = 0; x < f.pw; x++) {
      const px = x * 549 / f.pw;
      let db = hermite(xs, row, px);
      if (px > 370) {
        for (const [nx, na, wx, wa, depth] of NULLS) {
          const ex = (px - nx) / wx, ea = (angle - na) / wa;
          if (Math.abs(ex) < 3 && Math.abs(ea) < 3) db += depth * Math.exp(-ex * ex - ea * ea);
        }
      }
      // comb of the upper octave
      if (px > 470 && angle > 4) {
        const bend = px + Math.pow((angle - 60) / 30, 2) * .3;
        const amp = Math.min(1, (px - 470) / 25) * Math.min(1, (angle - 4) / 25) * (angle > 100 ? Math.max(.3, 1 - (angle - 100) / 50) : 1);
        db += amp * (4 * Math.sin(bend * bend / 700) + 3 * Math.sin(bend * 1.3) + 1.5 * Math.sin(bend * .37 + angle / 9));
      }
      const c = colorOf(db);
      for (const yy of [y, f.ph - 1 - y]) {
        const o = (yy * f.pw + x) * 4;
        img.data[o] = c[0];
        img.data[o + 1] = c[1];
        img.data[o + 2] = c[2];
        img.data[o + 3] = 255;
      }
    }
  }
  ctx.putImageData(img, 0, 0);

  vLines(f, 'rgba(100,100,100,.32)', 'rgba(90,90,90,.8)');
  for (let i = 1; i < 8; i++) {
    add(f.svg, 'path', { d: `M${f.x0} ${Math.round(f.y0 + f.ph * i / 8) + .5}h${f.pw}`, stroke: 'rgba(100,100,100,.7)' });
  }
  add(f.svg, 'rect', { x: f.x0 - .5, y: f.y0 - .5, width: f.pw, height: f.ph, fill: 'none', stroke: '#d8d8d8' });
  labels(f, { title: 'Directivity (hor)', right: 'deg', rightTicks: CHARTS.spl.rightTicks });

  // colour scale
  const grad = add(add(f.svg, 'defs', {}), 'linearGradient', { id: 'scale', x1: 0, y1: 0, x2: 0, y2: 1 });
  SCALE.forEach((s, i) => add(grad, 'stop', { offset: .015 + .985 * i / 7, 'stop-color': `rgb(${s.slice(1)})` }));
  add(f.svg, 'rect', { x: 6, y: 10, width: 23, height: f.h - 28, fill: 'url(#scale)' });
  SCALE.forEach((s, i) => {
    add(f.svg, 'text', { x: 27, y: Math.round(20 + (f.h - 36) * i / 7), class: s[0] === -48 ? 'end' : 'end dark' }, s[0]);
  });
}

function drawPolar() {
  const f = frame(document.getElementById('polar'));
  const cx = Math.round(f.w / 2) + .5, cy = Math.round(f.h / 2) + .5, R = Math.round(f.h / 2) - 19;
  const at = (deg, rx, ry = rx) => [cx - rx * Math.sin(deg * Math.PI / 180), cy - ry * Math.cos(deg * Math.PI / 180)];
  for (let pass = 0; pass < 2; pass++) {
    const color = pass ? '#5a5a5a' : '#262626';
    for (let i = 1; i <= 20; i++) {
      if ((i % 5 === 0) === !!pass) add(f.svg, 'circle', { cx, cy, r: R * i / 20, fill: 'none', stroke: color });
    }
    for (let a = 0; a < 360; a += 10) {
      if ((a % 30 === 0) === !!pass) {
        const p = at(a, R);
        add(f.svg, 'path', { d: `M${cx} ${cy}L${p[0].toFixed(1)} ${p[1].toFixed(1)}`, stroke: color });
      }
    }
  }
  const radius = [169, 168, 164, 161, 157, 147, 135, 129, 125, 124, 122, 119, 116];
  const pts = [];
  for (let i = -12; i < 12; i++) pts.push(at(i * 15, radius[Math.abs(i)] * R / 193));
  let d = 'M' + pts[0].join(' ');
  for (let i = 0; i < 24; i++) {
    const p = k => pts[(k + 24) % 24];
    const a = p(i - 1), b = p(i), c = p(i + 1), e = p(i + 2);
    d += 'C' + [b[0] + (c[0] - a[0]) / 6, b[1] + (c[1] - a[1]) / 6, c[0] - (e[0] - b[0]) / 6, c[1] - (e[1] - b[1]) / 6, c[0], c[1]].map(v => v.toFixed(1)).join(' ');
  }
  add(f.svg, 'path', { d, fill: 'none', stroke: '#6c6c6c', 'stroke-width': 2 });

  for (let a = -180; a < 180; a += 30) {
    const p = at(a, R + 15, R + 9);
    add(f.svg, 'text', { x: Math.round(p[0]), y: Math.round(p[1]) + 3, class: 'mid' }, a);
  }
  [-35, -25, -15, -5, 5].forEach((t, i) => {
    add(f.svg, 'text', { x: Math.round(cx + R * i / 4), y: Math.round(cy) - 4, class: 'mid' }, t);
  });
  add(f.svg, 'text', { x: 4, y: 12 }, 'Hor, 311 Hz, DI=5.9 dB');
  add(f.svg, 'text', { x: f.w * .75, y: 12, class: 'mid' }, 'Directivity (hor)');
}

// junctions and pins on the schematic
[[30, 60], [30, 121], [90, 60], [90, 80], [150, 60], [150, 80], [190, 60], [290, 60], [290, 80],
 [351, 60], [351, 80], [411, 60], [411, 80], [440, 60], [440, 121], [190, 210], [230, 210], [230, 230],
 [290, 210], [290, 230], [351, 210], [351, 230], [411, 210], [411, 230], [440, 210], [440, 271]
].forEach(([x, y]) => add(document.getElementById('pins'), 'circle', { cx: x + .5, cy: y + .5, r: 2 }));

function drawAll() {
  Object.keys(CHARTS).forEach(drawLineChart);
  drawHeat();
  drawPolar();
}
window.addEventListener('resize', drawAll);
drawAll();
```
